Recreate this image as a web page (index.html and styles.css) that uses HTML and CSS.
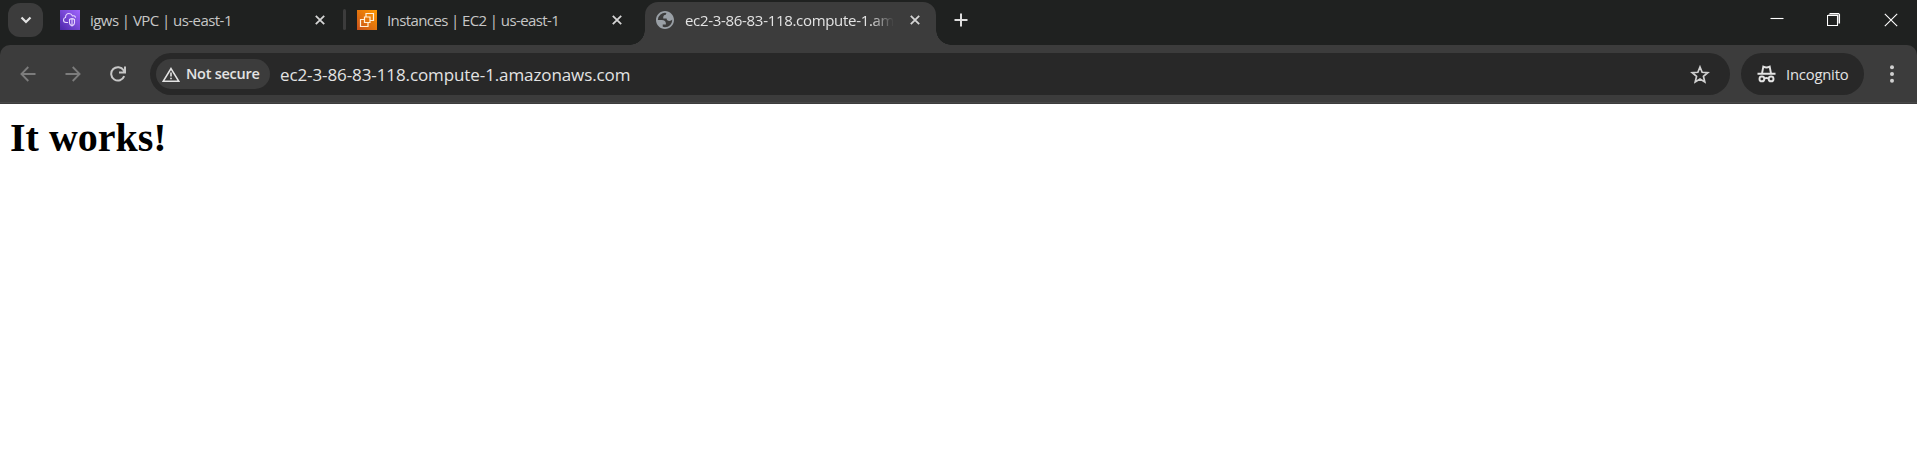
FILE: index.html
```html
<!DOCTYPE html>
<html lang="en">
<head>
<meta charset="utf-8">
<title>It works!</title>
<link rel="stylesheet" href="styles.css">
</head>
<body>
<div class="chrome">
<header class="tabstrip">
  <button class="tab-search" aria-label="Search tabs"><svg width="12" height="8" viewBox="0 0 12 8"><path d="M1.5 1.5 6 6l4.5-4.5" fill="none" stroke="#e3e3e3" stroke-width="2.2"/></svg></button>
  <div class="tab tab-vpc">
    <svg class="favicon" viewBox="0 0 20 20"><defs><linearGradient id="vpc" x1="0" y1="1" x2="1" y2="0"><stop offset="0" stop-color="#4d27aa"/><stop offset="1" stop-color="#a166ff"/></linearGradient></defs><path fill="url(#vpc)" d="M0 0h20v20H0z"/><path d="M8 12.500H6C4.500 12.300 3.500 11 3.500 9.900c0-1.300.9-2.200 2-2.400C5.600 5 7 3.500 9 3.500c1.800 0 2.900 1 3.400 2.400 1.700-.4 2.900.3 3.100 1.800" fill="none" stroke="#e6d6ff" stroke-width="1.100"/><path d="M9.500 9.500q2.500-1.800 5 0v3.600c0 1.300-1 2.300-2.500 2.900-1.500-.6-2.500-1.600-2.500-2.900zM12 9v6" fill="none" stroke="#e6d6ff" stroke-width="1.100"/></svg>
    <span class="title t1">igws | VPC | us-east-1</span>
    <svg class="close" viewBox="0 0 10 10"><path d="m.8.8 8.400 8.400M9.200.8.8 9.200"/></svg>
  </div>
  <div class="separator"></div>
  <div class="tab tab-ec2">
    <svg class="favicon" viewBox="0 0 20 20"><defs><linearGradient id="ec2" x1="0" y1="1" x2="1" y2="0"><stop offset="0" stop-color="#c8511b"/><stop offset="1" stop-color="#ff9900"/></linearGradient></defs><path fill="url(#ec2)" d="M0 0h20v20H0z"/><path d="M7.500 7h5.500v5.500H7.500zM9 5.500v-2h7.500v7h-2.300M5.800 9.500H3.500v7h7.500v-2.300M9 5.500V7M14.200 10.500H13M5.800 9.500h1.700M11 14.200v-1.700" fill="none" stroke="#fff0db" stroke-width="1.200"/></svg>
    <span class="title t2">Instances | EC2 | us-east-1</span>
    <svg class="close" viewBox="0 0 10 10"><path d="m.8.8 8.400 8.400M9.200.8.8 9.200"/></svg>
  </div>
  <div class="tab tab-active">
    <svg class="globe" viewBox="2 2 20 20"><path fill="#9aa0a6" fill-rule="evenodd" d="M12 2C6.480 2 2 6.480 2 12s4.480 10 10 10 10-4.480 10-10S17.520 2 12 2zM4 12h4.400c3.407.022 4.922 1.730 4.543 5.127H9.488v2.470a8.004 8.004 0 0 0 10.498-8.083C19.327 12.504 18.332 13 17 13c-2.137 0-3.206-.916-3.206-2.750h-3.748c-.274-2.728.683-4.092 2.870-4.092 0-.975.327-1.597.811-1.970A8.004 8.004 0 0 0 4 12z"/></svg>
    <span class="title t3">ec2-3-86-83-118.compute-1.amazonaws.com</span>
    <svg class="close" viewBox="0 0 10 10"><path d="m.8.8 8.400 8.400M9.200.8.8 9.200"/></svg>
  </div>
  <svg class="new-tab" width="14" height="14" viewBox="0 0 14 14"><path d="M7 .5v13M.5 7h13" stroke="#dedede" stroke-width="2"/></svg>
  <div class="window-controls">
    <svg width="14" height="14" viewBox="0 0 14 14"><path d="M.5 5.500h13"/></svg>
    <svg width="14" height="14" viewBox="0 0 14 14"><path d="M.5 2.500h10v10H.5zM2.500.5h9L12.500 1.500V10.500"/><path class="shade" d="M1.500 1.500h10v9"/></svg>
    <svg width="14" height="14" viewBox="0 0 14 14"><path d="m.8.8 12.400 12.400M13.200.8.8 13.200"/></svg>
  </div>
</header>
<nav class="toolbar">
  <div class="nav-buttons">
    <svg class="dim" width="16" height="16" viewBox="0 0 16 16"><path d="M15.500 8H1.500M8.300 1 1.400 8l6.900 7"/></svg>
    <svg class="dim" width="16" height="16" viewBox="0 0 16 16"><path d="M.5 8h14M7.700 1l6.900 7-6.900 7"/></svg>
    <svg class="reload" width="16" height="16" viewBox="0 0 16 16"><path d="M14.200 10.200A6.700 6.700 0 1 1 13.600 4.300L14.600 6.200M15 .5v6H9"/></svg>
  </div>
  <div class="omnibox">
    <div class="chip">
      <svg width="18" height="15" viewBox="0 0 18 15"><path d="M9 1.600 16.700 14.200H1.300z" fill="none" stroke="#e3e3e3" stroke-width="1.600"/><path d="M9 5.500v4M9 10.700v1.600" stroke="#e3e3e3" stroke-width="1.600"/></svg>
      <span class="chip-text">Not secure</span>
    </div>
    <span class="url">ec2-3-86-83-118.compute-1.amazonaws.com</span>
    <svg class="star" width="20" height="19" viewBox="0 0 20 19"><path d="m10 2 2.150 5.300 5.650.45-4.350 3.650 1.350 5.550-4.800-3-4.800 3 1.350-5.550L2.200 7.750l5.650-.45z" fill="none" stroke="#d0d0d0" stroke-width="1.700"/></svg>
  </div>
  <div class="incognito">
    <svg width="19" height="18" viewBox="0 0 19 18"><g fill="none" stroke="#e3e3e3" stroke-width="1.900"><path d="M.5 8.800h18M5 8.500 6.300 1.700q3.200 1.500 6.400 0l1.300 6.800M7.500 13.500q2-1 4 0"/><circle cx="4.900" cy="13.900" r="2.400"/><circle cx="14.100" cy="13.900" r="2.400"/></g></svg>
    <span class="incognito-text">Incognito</span>
  </div>
  <svg class="menu" width="4" height="18" viewBox="0 0 4 18"><g fill="#d0d0d0"><circle cx="2" cy="2.200" r="2"/><circle cx="2" cy="9" r="2"/><circle cx="2" cy="15.800" r="2"/></g></svg>
</nav>
</div>
<main class="page"><h1>It works!</h1></main>
</body>
</html>
```
FILE: styles.css
```css
* { box-sizing: border-box; }
body { margin: 0; width: 1917px; height: 466px; overflow: hidden; background: #fff; font-family: "Open Sans", "Noto Sans", sans-serif; }
svg { display: block; flex: none; }
.chrome { background: #1f2120; }
.tabstrip { display: flex; height: 45px; }
.tab-search { display: flex; align-items: center; justify-content: center; width: 35px; height: 34px; margin: 3px 0 0 8px; padding: 0; border: 0; border-radius: 12px; background: #3c3c3c; }
.tab { display: flex; align-items: center; height: 40px; }
.tab-vpc { width: 300px; padding: 0 18px 0 17px; }
.tab-ec2 { width: 299px; padding: 0 23px 0 11px; }
.separator { width: 3px; height: 21px; margin-top: 9px; border-radius: 2px; background: #3c3c3c; }
.favicon { width: 20px; height: 20px; margin-right: 10px; }
.title { color: #c7c7c7; font-size: 15px; line-height: 20px; white-space: nowrap; }
.t1 { letter-spacing: -0.55px; }
.t2 { letter-spacing: -0.6px; }
.t3 { width: 209px; overflow: hidden; color: #e3e3e3; letter-spacing: -0.31px; -webkit-mask-image: linear-gradient(90deg, #000 185px, transparent 209px); mask-image: linear-gradient(90deg, #000 185px, transparent 209px); }
.close { width: 10px; height: 10px; margin-left: auto; fill: none; stroke: #d5d5d5; stroke-width: 1.8; }
.tab-active { position: relative; width: 291px; height: 43px; margin-top: 2px; padding: 0 16px 7px 11px; border-radius: 13px 13px 0 0; background: #3c3c3c; }
.tab-active::before, .tab-active::after { content: ""; position: absolute; bottom: 0; width: 15px; height: 15px; }
.tab-active::before { right: 100%; background: radial-gradient(circle at 0 0, transparent 14.5px, #3c3c3c 15px); }
.tab-active::after { left: 100%; background: radial-gradient(circle at 100% 0, transparent 14.5px, #3c3c3c 15px); }
.globe { width: 18px; height: 18px; margin-right: 11px; }
.new-tab { margin: 13px 0 0 18px; }
.window-controls { display: flex; gap: 43px; margin: 13px 19px 0 auto; }
.window-controls path { fill: none; stroke: #fff; stroke-width: 1.1; }
.window-controls .shade { stroke: #999; }
.toolbar { display: flex; align-items: center; height: 59px; padding-bottom: 1px; background: linear-gradient(#3c3c3c 57px, #474747 57px, #474747 58px, #3c3c3c 58px); border-radius: 10px 10px 0 0; }
.nav-buttons { display: flex; gap: 29px; width: 150px; padding-left: 20px; fill: none; stroke-width: 1.8; }
.dim { stroke: #7c7c7c; }
.reload { stroke: #c7c7c7; stroke-width: 2; }
.omnibox { display: flex; align-items: center; width: 1580px; height: 42px; padding: 0 20px 0 6px; border-radius: 21px; background: #282828; }
.chip { display: flex; align-items: center; width: 114px; height: 30px; margin-right: 10px; padding-left: 6px; border-radius: 15px; background: #3c3c3c; }
.chip-text { margin-left: 6px; color: #e3e3e3; font-size: 14.5px; font-weight: 600; letter-spacing: -0.25px; line-height: 20px; white-space: nowrap; }
.url { color: #e3e3e3; font-size: 17px; letter-spacing: -0.1px; line-height: 22px; padding-top: 2px; white-space: nowrap; }
.star { margin-left: auto; }
.incognito { display: flex; align-items: center; width: 123px; height: 42px; margin-left: 11px; padding-left: 16px; border-radius: 21px; background: #282828; }
.incognito-text { margin-left: 10px; color: #e3e3e3; font-size: 14.8px; letter-spacing: -0.2px; line-height: 20px; }
.menu { margin-left: 26px; }
.page { padding: 0 10px; }
h1 { margin: 0; padding-top: 11px; color: #000; font: bold 40px/46px "Liberation Serif", serif; }
```
